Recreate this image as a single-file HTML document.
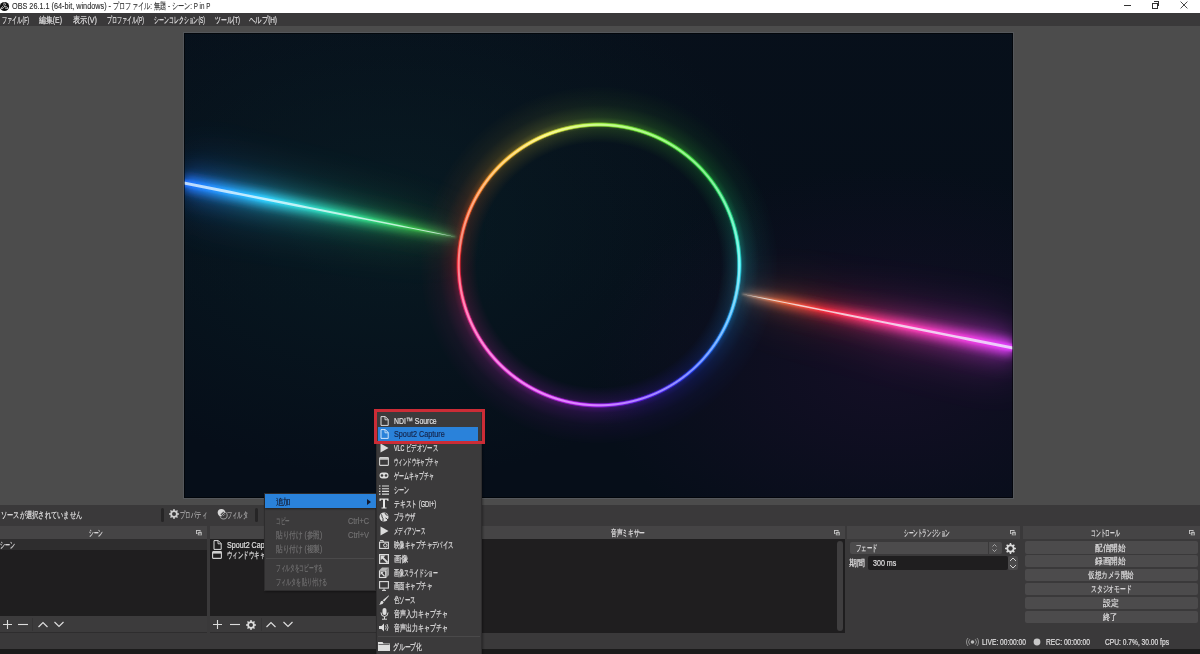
<!DOCTYPE html>
<html><head><meta charset="utf-8">
<style>
*{box-sizing:border-box;margin:0;padding:0}
html,body{width:1200px;height:654px;overflow:hidden;background:#3a393a;font-family:"Liberation Sans",sans-serif;color:#e1e0e1;font-size:9px;line-height:1}
.a{position:absolute}
.t{position:absolute;white-space:nowrap;transform-origin:0 50%;-webkit-text-stroke:0.18px currentColor}
svg.a{overflow:visible}
</style></head><body>
<div class="a" style="left:0px;top:0px;width:1200px;height:13px;background:#fff;"></div>
<svg class="a" style="left:0px;top:1px;" width="10" height="11" viewBox="0 0 10 11"><circle cx="4.5" cy="5.5" r="4.6" fill="#111"/><path transform="rotate(0 4.5 5.5)" d="M4.5 5.5Q3.2 3.6 4.2 1.6Q5.6 2.6 5.6 4.2" fill="none" stroke="#ddd" stroke-width="0.75"/><path transform="rotate(120 4.5 5.5)" d="M4.5 5.5Q3.2 3.6 4.2 1.6Q5.6 2.6 5.6 4.2" fill="none" stroke="#ddd" stroke-width="0.75"/><path transform="rotate(240 4.5 5.5)" d="M4.5 5.5Q3.2 3.6 4.2 1.6Q5.6 2.6 5.6 4.2" fill="none" stroke="#ddd" stroke-width="0.75"/></svg>
<span id="t0" class="t" style="left:12px;top:-0.20px;font-size:9px;line-height:12px;color:#2a2a2a;transform:scaleX(0.8078);-webkit-text-stroke:0.1px #2a2a2a">OBS 26.1.1 (64-bit, windows) -</span>
<span id="t1" class="t" style="left:112.7px;top:-0.20px;font-size:9px;line-height:12px;color:#2a2a2a;transform:scaleX(0.6908);-webkit-text-stroke:0.1px #2a2a2a">プロファイル: 無題 - シーン: P in P</span>
<div class="a" style="left:1124px;top:5px;width:7px;height:1px;background:#333;"></div>
<div class="a" style="left:1152px;top:3px;width:6px;height:6px;background:transparent;border:1px solid #333"></div>
<div class="a" style="left:1154px;top:1px;width:5px;height:5px;background:transparent;border-top:1px solid #333;border-right:1px solid #333"></div>
<svg class="a" style="left:1180px;top:1px;" width="8" height="8" viewBox="0 0 8 8"><path d="M0.6 0.6L7.4 7.4M7.4 0.6L0.6 7.4" stroke="#333" stroke-width="0.9"/></svg>
<div class="a" style="left:0px;top:13px;width:1200px;height:13px;background:#3a393a;"></div>
<span id="t2" class="t" style="left:2px;top:14.00px;font-size:9px;line-height:12px;color:#e1e0e1;transform:scaleX(0.5684);">ファイル(F)</span>
<span id="t3" class="t" style="left:39px;top:14.00px;font-size:9px;line-height:12px;color:#e1e0e1;transform:scaleX(0.7667);">編集(E)</span>
<span id="t4" class="t" style="left:73px;top:14.00px;font-size:9px;line-height:12px;color:#e1e0e1;transform:scaleX(0.8000);">表示(V)</span>
<span id="t5" class="t" style="left:107px;top:14.00px;font-size:9px;line-height:12px;color:#e1e0e1;transform:scaleX(0.5606);">プロファイル(P)</span>
<span id="t6" class="t" style="left:154px;top:14.00px;font-size:9px;line-height:12px;color:#e1e0e1;transform:scaleX(0.5484);">シーンコレクション(S)</span>
<span id="t7" class="t" style="left:215px;top:14.00px;font-size:9px;line-height:12px;color:#e1e0e1;transform:scaleX(0.6494);">ツール(T)</span>
<span id="t8" class="t" style="left:249px;top:14.00px;font-size:9px;line-height:12px;color:#e1e0e1;transform:scaleX(0.7089);">ヘルプ(H)</span>
<div class="a" style="left:0px;top:26px;width:1200px;height:479px;background:#4c4c4c;"></div>
<div class="a" style="left:183px;top:32px;width:831px;height:467px;background:#54575b;"></div>
<div class="a" style="left:184px;top:33px;width:829px;height:465px;background:#060e19;overflow:hidden">
<div class="a" style="left:0;top:-1px;width:829px;height:466px;background:radial-gradient(ellipse 380px 260px at 25% 40%, rgba(10,40,45,.45), rgba(0,0,0,0) 100%), radial-gradient(ellipse 300px 200px at 85% 72%, rgba(45,15,60,.35), rgba(0,0,0,0) 100%), linear-gradient(180deg, rgba(10,20,30,.3), rgba(0,0,0,0) 60%)"></div>
<div class="a" style="left:215px;top:32px;width:400px;height:400px;border-radius:50%;background:conic-gradient(from 0deg,#a0f838 0deg,#60f030 25deg,#28e040 50deg,#20e890 70deg,#30f0f8 90deg,#20a8ff 112deg,#2040ff 138deg,#6020ff 160deg,#b020ff 182deg,#d828f0 205deg,#f030d0 228deg,#ff3090 250deg,#ff2030 270deg,#ff5820 292deg,#ffb020 315deg,#f8f040 337deg,#a0f838 360deg);-webkit-mask-image:radial-gradient(circle at 50% 50%, rgba(0,0,0,0) 122px, rgba(0,0,0,.3) 136px, rgba(0,0,0,.8) 141px, rgba(0,0,0,.35) 148px, rgba(0,0,0,.12) 160px, rgba(0,0,0,0) 180px);filter:blur(2.5px);opacity:.45"></div>
<div class="a" style="left:215px;top:32px;width:400px;height:400px;border-radius:50%;background:conic-gradient(from 0deg,#a0f838 0deg,#60f030 25deg,#28e040 50deg,#20e890 70deg,#30f0f8 90deg,#20a8ff 112deg,#2040ff 138deg,#6020ff 160deg,#b020ff 182deg,#d828f0 205deg,#f030d0 228deg,#ff3090 250deg,#ff2030 270deg,#ff5820 292deg,#ffb020 315deg,#f8f040 337deg,#a0f838 360deg);-webkit-mask-image:radial-gradient(circle at 50% 50%, rgba(0,0,0,0) 137.8px, #000 139.2px, #000 141.4px, rgba(0,0,0,0) 143px)"></div>
<div class="a" style="left:215px;top:32px;width:400px;height:400px;border-radius:50%;background:rgba(255,255,255,.45);-webkit-mask-image:radial-gradient(circle at 50% 50%, rgba(0,0,0,0) 138.8px, #000 139.8px, #000 140.8px, rgba(0,0,0,0) 141.8px)"></div>
<svg class="a" style="left:0;top:-1px" width="829" height="466" viewBox="0 0 829 466">
<defs>
<linearGradient id="gl" x1="0" y1="151" x2="272" y2="205" gradientUnits="userSpaceOnUse">
<stop offset="0" stop-color="#2070ff"/><stop offset=".3" stop-color="#30d0ff"/><stop offset=".6" stop-color="#30e0a0"/><stop offset=".85" stop-color="#40d050"/><stop offset="1" stop-color="#60a060"/></linearGradient>
<linearGradient id="gr" x1="558" y1="262" x2="829" y2="316" gradientUnits="userSpaceOnUse">
<stop offset="0" stop-color="#b0a090"/><stop offset=".15" stop-color="#ff7040"/><stop offset=".3" stop-color="#ff3040"/><stop offset=".6" stop-color="#ff40b0"/><stop offset="1" stop-color="#e040ff"/></linearGradient>
<filter id="bl" x="-20%" y="-200%" width="140%" height="500%"><feGaussianBlur stdDeviation="5"/></filter>
<filter id="bl2" x="-20%" y="-200%" width="140%" height="500%"><feGaussianBlur stdDeviation="0.8"/></filter><filter id="bl4" x="-30%" y="-300%" width="160%" height="700%"><feGaussianBlur stdDeviation="10"/></filter><filter id="bl5" x="-50%" y="-500%" width="200%" height="1100%"><feGaussianBlur stdDeviation="22"/></filter><filter id="bl3" x="-20%" y="-200%" width="140%" height="500%"><feGaussianBlur stdDeviation="0.4"/></filter>
</defs>
<polygon points="0.0,123.00 22.7,128.52 45.3,134.09 68.0,139.72 90.7,145.40 113.3,151.17 136.0,157.03 158.7,163.01 181.3,169.14 204.0,175.50 226.7,182.20 249.3,189.57 272.0,201.00 272.0,209.00 249.3,211.43 226.7,209.80 204.0,207.50 181.3,204.86 158.7,201.99 136.0,198.97 113.3,195.83 90.7,192.60 68.0,189.28 45.3,185.91 22.7,182.48 0.0,179.00" fill="url(#gl)" filter="url(#bl5)" opacity=".2"/>
<polygon points="0.0,134.00 22.7,139.21 45.3,144.45 68.0,149.72 90.7,155.02 113.3,160.37 136.0,165.76 158.7,171.22 181.3,176.76 204.0,182.41 226.7,188.22 249.3,194.35 272.0,202.00 272.0,208.00 249.3,206.65 226.7,203.78 204.0,200.59 181.3,197.24 158.7,193.78 136.0,190.24 113.3,186.63 90.7,182.98 68.0,179.28 45.3,175.55 22.7,171.79 0.0,168.00" fill="url(#gl)" filter="url(#bl4)" opacity=".3"/>
<polygon points="0.0,143.70 11.3,146.09 22.7,148.48 34.0,150.87 45.3,153.27 56.7,155.67 68.0,158.07 79.3,160.48 90.7,162.89 102.0,165.31 113.3,167.74 124.7,170.17 136.0,172.60 147.3,175.05 158.7,177.50 170.0,179.97 181.3,182.45 192.7,184.94 204.0,187.45 215.3,189.98 226.7,192.55 238.0,195.15 249.3,197.82 260.7,200.62 272.0,204.20 272.0,205.80 260.7,204.88 249.3,203.18 238.0,201.35 226.7,199.45 215.3,197.52 204.0,195.55 192.7,193.56 181.3,191.55 170.0,189.53 158.7,187.50 147.3,185.45 136.0,183.40 124.7,181.33 113.3,179.26 102.0,177.19 90.7,175.11 79.3,173.02 68.0,170.93 56.7,168.83 45.3,166.73 34.0,164.63 22.7,162.52 11.3,160.41 0.0,158.30" fill="url(#gl)" filter="url(#bl)" opacity="1"/>
<polygon points="0.0,147.60 11.3,149.91 22.7,152.23 34.0,154.54 45.3,156.86 56.7,159.18 68.0,161.50 79.3,163.83 90.7,166.15 102.0,168.48 113.3,170.81 124.7,173.14 136.0,175.48 147.3,177.82 158.7,180.16 170.0,182.51 181.3,184.87 192.7,187.23 204.0,189.60 215.3,191.98 226.7,194.38 238.0,196.79 249.3,199.23 260.7,201.74 272.0,204.60 272.0,205.40 260.7,203.76 249.3,201.77 238.0,199.71 226.7,197.62 215.3,195.52 204.0,193.40 192.7,191.27 181.3,189.13 170.0,186.99 158.7,184.84 147.3,182.68 136.0,180.52 124.7,178.36 113.3,176.19 102.0,174.02 90.7,171.85 79.3,169.67 68.0,167.50 56.7,165.32 45.3,163.14 34.0,160.96 22.7,158.77 11.3,156.59 0.0,154.40" fill="url(#gl)" filter="url(#bl2)"/>
<polygon points="0.0,149.45 11.3,151.74 22.7,154.03 34.0,156.32 45.3,158.61 56.7,160.90 68.0,163.19 79.3,165.48 90.7,167.77 102.0,170.07 113.3,172.36 124.7,174.66 136.0,176.96 147.3,179.26 158.7,181.56 170.0,183.87 181.3,186.17 192.7,188.48 204.0,190.80 215.3,193.11 226.7,195.44 238.0,197.77 249.3,200.11 260.7,202.48 272.0,204.95 272.0,205.05 260.7,203.02 249.3,200.89 238.0,198.73 226.7,196.56 215.3,194.39 204.0,192.20 192.7,190.02 181.3,187.83 170.0,185.63 158.7,183.44 147.3,181.24 136.0,179.04 124.7,176.84 113.3,174.64 102.0,172.43 90.7,170.23 79.3,168.02 68.0,165.81 56.7,163.60 45.3,161.39 34.0,159.18 22.7,156.97 11.3,154.76 0.0,152.55" fill="#f0fcff" opacity=".75" filter="url(#bl3)"/>
<polygon points="558.0,258.00 580.6,255.57 603.2,257.20 625.8,259.50 648.3,262.14 670.9,265.01 693.5,268.03 716.1,271.17 738.7,274.40 761.2,277.72 783.8,281.09 806.4,284.52 829.0,288.00 829.0,344.00 806.4,338.48 783.8,332.91 761.2,327.28 738.7,321.60 716.1,315.83 693.5,309.97 670.9,303.99 648.3,297.86 625.8,291.50 603.2,284.80 580.6,277.43 558.0,266.00" fill="url(#gr)" filter="url(#bl5)" opacity=".2"/>
<polygon points="558.0,259.00 580.6,260.35 603.2,263.22 625.8,266.41 648.3,269.76 670.9,273.22 693.5,276.76 716.1,280.37 738.7,284.02 761.2,287.72 783.8,291.45 806.4,295.21 829.0,299.00 829.0,333.00 806.4,327.79 783.8,322.55 761.2,317.28 738.7,311.98 716.1,306.63 693.5,301.24 670.9,295.78 648.3,290.24 625.8,284.59 603.2,278.78 580.6,272.65 558.0,265.00" fill="url(#gr)" filter="url(#bl4)" opacity=".3"/>
<polygon points="558.0,261.20 569.3,262.12 580.6,263.82 591.9,265.65 603.2,267.55 614.5,269.48 625.8,271.45 637.0,273.44 648.3,275.45 659.6,277.47 670.9,279.50 682.2,281.55 693.5,283.60 704.8,285.67 716.1,287.74 727.4,289.81 738.7,291.89 750.0,293.98 761.2,296.07 772.5,298.17 783.8,300.27 795.1,302.37 806.4,304.48 817.7,306.59 829.0,308.70 829.0,323.30 817.7,320.91 806.4,318.52 795.1,316.13 783.8,313.73 772.5,311.33 761.2,308.93 750.0,306.52 738.7,304.11 727.4,301.69 716.1,299.26 704.8,296.83 693.5,294.40 682.2,291.95 670.9,289.50 659.6,287.03 648.3,284.55 637.0,282.06 625.8,279.55 614.5,277.02 603.2,274.45 591.9,271.85 580.6,269.18 569.3,266.38 558.0,262.80" fill="url(#gr)" filter="url(#bl)" opacity="1"/>
<polygon points="558.0,261.60 569.3,263.24 580.6,265.23 591.9,267.29 603.2,269.38 614.5,271.48 625.8,273.60 637.0,275.73 648.3,277.87 659.6,280.01 670.9,282.16 682.2,284.32 693.5,286.48 704.8,288.64 716.1,290.81 727.4,292.98 738.7,295.15 750.0,297.33 761.2,299.50 772.5,301.68 783.8,303.86 795.1,306.04 806.4,308.23 817.7,310.41 829.0,312.60 829.0,319.40 817.7,317.09 806.4,314.77 795.1,312.46 783.8,310.14 772.5,307.82 761.2,305.50 750.0,303.17 738.7,300.85 727.4,298.52 716.1,296.19 704.8,293.86 693.5,291.52 682.2,289.18 670.9,286.84 659.6,284.49 648.3,282.13 637.0,279.77 625.8,277.40 614.5,275.02 603.2,272.62 591.9,270.21 580.6,267.77 569.3,265.26 558.0,262.40" fill="url(#gr)" filter="url(#bl2)"/>
<polygon points="558.0,261.95 569.3,263.98 580.6,266.11 591.9,268.27 603.2,270.44 614.5,272.61 625.8,274.80 637.0,276.98 648.3,279.17 659.6,281.37 670.9,283.56 682.2,285.76 693.5,287.96 704.8,290.16 716.1,292.36 727.4,294.57 738.7,296.77 750.0,298.98 761.2,301.19 772.5,303.40 783.8,305.61 795.1,307.82 806.4,310.03 817.7,312.24 829.0,314.45 829.0,317.55 817.7,315.26 806.4,312.97 795.1,310.68 783.8,308.39 772.5,306.10 761.2,303.81 750.0,301.52 738.7,299.23 727.4,296.93 716.1,294.64 704.8,292.34 693.5,290.04 682.2,287.74 670.9,285.44 659.6,283.13 648.3,280.83 637.0,278.52 625.8,276.20 614.5,273.89 603.2,271.56 591.9,269.23 580.6,266.89 569.3,264.52 558.0,262.05" fill="#f0fcff" opacity=".75" filter="url(#bl3)"/>
</svg>
<div class="a" style="left:0;top:0;width:829px;height:465px;box-shadow:inset 0 0 0 1px rgba(0,0,0,.55)"></div></div>
<div class="a" style="left:0px;top:505px;width:1200px;height:21px;background:#3a393a;"></div>
<span id="t9" class="t" style="left:1px;top:508.50px;font-size:9px;line-height:12px;color:#e1e0e1;transform:scaleX(0.6923);">ソースが選択されていません</span>
<div class="a" style="left:161px;top:508px;width:3px;height:14px;background:#262526;border-radius:1.5px"></div>
<div class="a" style="left:255px;top:508px;width:3px;height:14px;background:#262526;border-radius:1.5px"></div>
<svg class="a" style="left:169px;top:509px;" width="10" height="10" viewBox="0 0 10 10"><polygon points="4.21,1.49 4.35,0.04 5.65,0.04 5.79,1.49 6.93,1.96 8.05,1.04 8.96,1.95 8.04,3.07 8.51,4.21 9.96,4.35 9.96,5.65 8.51,5.79 8.04,6.93 8.96,8.05 8.05,8.96 6.93,8.04 5.79,8.51 5.65,9.96 4.35,9.96 4.21,8.51 3.07,8.04 1.95,8.96 1.04,8.05 1.96,6.93 1.49,5.79 0.04,5.65 0.04,4.35 1.49,4.21 1.96,3.07 1.04,1.95 1.95,1.04 3.07,1.96" fill="#cfcfcf"/><circle cx="5.0" cy="5.0" r="3.5999999999999996" fill="#cfcfcf"/><circle cx="5.0" cy="5.0" r="2.0" fill="#3a393a"/></svg>
<span id="t10" class="t" style="left:180px;top:508.50px;font-size:9px;line-height:12px;color:#a9a8a9;transform:scaleX(0.6000);">プロパティ</span>
<svg class="a" style="left:217px;top:508px;" width="11" height="12" viewBox="0 0 11 12"><circle cx="6.6" cy="7.4" r="3.6" fill="none" stroke="#9a9a9a" stroke-width="1.1"/><circle cx="4.4" cy="4.6" r="3.7" fill="#d8d8d8"/><path d="M6.2 3.4L9 6.2L6.2 9L3.4 6.2Z" fill="#3a393a"/><path d="M4.2 5.4l2.6 2.6M5.4 4.2l2.6 2.6M4.9 6.9l2.6-2.6" stroke="#bdbdbd" stroke-width="0.7"/></svg>
<span id="t11" class="t" style="left:227px;top:508.50px;font-size:9px;line-height:12px;color:#a9a8a9;transform:scaleX(0.5833);">フィルタ</span>
<div class="a" style="left:0px;top:526px;width:207px;height:13px;background:#454445;"></div>
<div class="a" style="left:0px;top:539px;width:207px;height:77px;background:#1f1e1f;"></div>
<div class="a" style="left:0px;top:616px;width:207px;height:17px;background:#3c3b3c;"></div>
<div class="a" style="left:0px;top:632px;width:207px;height:1px;background:#2e2d2e;"></div>
<svg class="a" style="left:196px;top:529.5px;" width="7" height="7" viewBox="0 0 7 7"><rect x="0.5" y="0.5" width="3.6" height="3" fill="none" stroke="#c8c8c8" stroke-width="0.9"/><rect x="1.8" y="1.9" width="4.2" height="3.6" fill="#d0d0d0" stroke="#454445" stroke-width="0.5"/><rect x="2.6" y="3.2" width="2.6" height="1.6" fill="#6a6a6a"/></svg>
<span id="t12" class="t" style="left:89px;top:526.50px;font-size:9px;line-height:12px;color:#e1e0e1;transform:scaleX(0.5185);">シーン</span>
<div class="a" style="left:0px;top:539px;width:207px;height:11px;background:#2e2d2e;"></div>
<span id="t13" class="t" style="left:0px;top:538.50px;font-size:9px;line-height:12px;color:#e1e0e1;transform:scaleX(0.5556);">シーン</span>
<div class="a" style="left:210px;top:526px;width:269px;height:13px;background:#454445;"></div>
<div class="a" style="left:210px;top:539px;width:269px;height:77px;background:#1f1e1f;"></div>
<div class="a" style="left:210px;top:616px;width:269px;height:17px;background:#3c3b3c;"></div>
<div class="a" style="left:210px;top:632px;width:269px;height:1px;background:#2e2d2e;"></div>
<svg class="a" style="left:213px;top:540px;" width="9" height="10" viewBox="0 0 9 10"><path d="M1 0.6H5.3L8.2 3.5V9.4H1Z" fill="none" stroke="#dcdcdc" stroke-width="1"/><path d="M5 0.6V3.8H8.2" fill="none" stroke="#dcdcdc" stroke-width="0.9"/></svg>
<span id="t14" class="t" style="left:227px;top:538.80px;font-size:9px;line-height:12px;color:#e1e0e1;transform:scaleX(0.7931);">Spout2 Capture</span>
<svg class="a" style="left:212px;top:551px;" width="10" height="8" viewBox="0 0 10 8"><rect x="0.6" y="0.6" width="8.8" height="6.8" rx="0.6" fill="none" stroke="#d0d0d0" stroke-width="1.1"/><path d="M0.6 1.8H9.4" stroke="#d0d0d0" stroke-width="1.6"/></svg>
<span id="t15" class="t" style="left:227px;top:548.90px;font-size:9px;line-height:12px;color:#e1e0e1;transform:scaleX(0.6111);">ウィンドウキャプチャ</span>
<div class="a" style="left:482px;top:526px;width:363px;height:13px;background:#454445;"></div>
<span id="t16" class="t" style="left:611px;top:526.60px;font-size:9px;line-height:12px;color:#e1e0e1;transform:scaleX(0.6296);">音声ミキサー</span>
<svg class="a" style="left:834px;top:529.5px;" width="7" height="7" viewBox="0 0 7 7"><rect x="0.5" y="0.5" width="3.6" height="3" fill="none" stroke="#c8c8c8" stroke-width="0.9"/><rect x="1.8" y="1.9" width="4.2" height="3.6" fill="#d0d0d0" stroke="#454445" stroke-width="0.5"/><rect x="2.6" y="3.2" width="2.6" height="1.6" fill="#6a6a6a"/></svg>
<div class="a" style="left:482px;top:539px;width:363px;height:94px;background:#1f1e1f;"></div>
<div class="a" style="left:837px;top:541px;width:6px;height:90px;background:#3f3e3f;border-radius:3px"></div>
<div class="a" style="left:847px;top:526px;width:173px;height:13px;background:#454445;"></div>
<span id="t17" class="t" style="left:904px;top:526.50px;font-size:9px;line-height:12px;color:#e1e0e1;transform:scaleX(0.5111);">シーントランジション</span>
<svg class="a" style="left:1010px;top:529.5px;" width="7" height="7" viewBox="0 0 7 7"><rect x="0.5" y="0.5" width="3.6" height="3" fill="none" stroke="#c8c8c8" stroke-width="0.9"/><rect x="1.8" y="1.9" width="4.2" height="3.6" fill="#d0d0d0" stroke="#454445" stroke-width="0.5"/><rect x="2.6" y="3.2" width="2.6" height="1.6" fill="#6a6a6a"/></svg>
<div class="a" style="left:850px;top:542px;width:152px;height:12px;background:#4c4b4c;border-radius:2px"></div>
<div class="a" style="left:988px;top:542px;width:1px;height:12px;background:#3a393a;"></div>
<svg class="a" style="left:991px;top:543px;" width="7" height="10" viewBox="0 0 7 10"><path d="M1.5 3.5L3.5 1.5L5.5 3.5M1.5 6.5L3.5 8.5L5.5 6.5" fill="none" stroke="#bbb" stroke-width="0.8"/></svg>
<span id="t18" class="t" style="left:856px;top:542.00px;font-size:9px;line-height:12px;color:#e1e0e1;transform:scaleX(0.5972);">フェード</span>
<svg class="a" style="left:1005px;top:543px;" width="11" height="11" viewBox="0 0 11 11"><polygon points="4.64,1.64 4.79,0.05 6.21,0.05 6.36,1.64 7.62,2.16 8.85,1.14 9.86,2.15 8.84,3.38 9.36,4.64 10.95,4.79 10.95,6.21 9.36,6.36 8.84,7.62 9.86,8.85 8.85,9.86 7.62,8.84 6.36,9.36 6.21,10.95 4.79,10.95 4.64,9.36 3.38,8.84 2.15,9.86 1.14,8.85 2.16,7.62 1.64,6.36 0.05,6.21 0.05,4.79 1.64,4.64 2.16,3.38 1.14,2.15 2.15,1.14 3.38,2.16" fill="#dcdcdc"/><circle cx="5.5" cy="5.5" r="3.96" fill="#dcdcdc"/><circle cx="5.5" cy="5.5" r="2.2" fill="#3a393a"/></svg>
<span id="t19" class="t" style="left:849px;top:556.70px;font-size:9px;line-height:12px;color:#e1e0e1;transform:scaleX(0.8889);">期間</span>
<div class="a" style="left:868px;top:556px;width:140px;height:13.5px;background:#1f1e1f;border-radius:2px"></div>
<span id="t20" class="t" style="left:872.5px;top:556.70px;font-size:9px;line-height:12px;color:#e1e0e1;transform:scaleX(0.7894);">300 ms</span>
<div class="a" style="left:1008px;top:556px;width:10px;height:14px;background:#4a494a;border-radius:2px"></div>
<svg class="a" style="left:1008px;top:556px;" width="10" height="14" viewBox="0 0 10 14"><path d="M2 5L5 2L8 5M2 9L5 12L8 9" fill="none" stroke="#cfcfcf" stroke-width="1"/></svg>
<div class="a" style="left:1023px;top:526px;width:177px;height:13px;background:#454445;"></div>
<span id="t21" class="t" style="left:1090.7px;top:526.60px;font-size:9px;line-height:12px;color:#e1e0e1;transform:scaleX(0.5296);">コントロール</span>
<svg class="a" style="left:1189px;top:529.5px;" width="7" height="7" viewBox="0 0 7 7"><rect x="0.5" y="0.5" width="3.6" height="3" fill="none" stroke="#c8c8c8" stroke-width="0.9"/><rect x="1.8" y="1.9" width="4.2" height="3.6" fill="#d0d0d0" stroke="#454445" stroke-width="0.5"/><rect x="2.6" y="3.2" width="2.6" height="1.6" fill="#6a6a6a"/></svg>
<div class="a" style="left:1025px;top:541.4px;width:172.5px;height:12.2px;background:#4c4b4c;border-radius:2px"></div>
<span id="t22" class="t" style="left:1095.4px;top:541.50px;font-size:9px;line-height:12px;color:#e1e0e1;transform:scaleX(0.8500);">配信開始</span>
<div class="a" style="left:1025px;top:555.24px;width:172.5px;height:12.2px;background:#4c4b4c;border-radius:2px"></div>
<span id="t23" class="t" style="left:1095.4px;top:555.34px;font-size:9px;line-height:12px;color:#e1e0e1;transform:scaleX(0.8500);">録画開始</span>
<div class="a" style="left:1025px;top:569.08px;width:172.5px;height:12.2px;background:#4c4b4c;border-radius:2px"></div>
<span id="t24" class="t" style="left:1088px;top:569.18px;font-size:9px;line-height:12px;color:#e1e0e1;transform:scaleX(0.7238);">仮想カメラ開始</span>
<div class="a" style="left:1025px;top:582.92px;width:172.5px;height:12.2px;background:#4c4b4c;border-radius:2px"></div>
<span id="t25" class="t" style="left:1090.7px;top:583.02px;font-size:9px;line-height:12px;color:#e1e0e1;transform:scaleX(0.6397);">スタジオモード</span>
<div class="a" style="left:1025px;top:596.76px;width:172.5px;height:12.2px;background:#4c4b4c;border-radius:2px"></div>
<span id="t26" class="t" style="left:1102.5px;top:596.86px;font-size:9px;line-height:12px;color:#e1e0e1;transform:scaleX(0.8833);">設定</span>
<div class="a" style="left:1025px;top:610.6px;width:172.5px;height:12.2px;background:#4c4b4c;border-radius:2px"></div>
<span id="t27" class="t" style="left:1103px;top:610.70px;font-size:9px;line-height:12px;color:#e1e0e1;transform:scaleX(0.8056);">終了</span>
<svg class="a" style="left:3px;top:620px;" width="9" height="9" viewBox="0 0 9 9"><path d="M4.5 0V9M0 4.5H9" stroke="#dcdcdc" stroke-width="1.1"/></svg>
<svg class="a" style="left:18px;top:620px;" width="10" height="9" viewBox="0 0 10 9"><path d="M0 4.5H10" stroke="#dcdcdc" stroke-width="1.1"/></svg>
<div class="a" style="left:32px;top:618px;width:1px;height:13px;background:#353435;"></div>
<svg class="a" style="left:38px;top:621px;" width="10" height="7" viewBox="0 0 10 7"><path d="M0.5 6L5 1.5L9.5 6" fill="none" stroke="#dcdcdc" stroke-width="1.2"/></svg>
<svg class="a" style="left:54px;top:621px;" width="10" height="7" viewBox="0 0 10 7"><path d="M0.5 1L5 5.5L9.5 1" fill="none" stroke="#dcdcdc" stroke-width="1.2"/></svg>
<svg class="a" style="left:213px;top:620px;" width="9" height="9" viewBox="0 0 9 9"><path d="M4.5 0V9M0 4.5H9" stroke="#dcdcdc" stroke-width="1.1"/></svg>
<svg class="a" style="left:230px;top:620px;" width="10" height="9" viewBox="0 0 10 9"><path d="M0 4.5H10" stroke="#dcdcdc" stroke-width="1.1"/></svg>
<svg class="a" style="left:246px;top:619.5px;" width="10" height="10" viewBox="0 0 10 10"><polygon points="4.21,1.49 4.35,0.04 5.65,0.04 5.79,1.49 6.93,1.96 8.05,1.04 8.96,1.95 8.04,3.07 8.51,4.21 9.96,4.35 9.96,5.65 8.51,5.79 8.04,6.93 8.96,8.05 8.05,8.96 6.93,8.04 5.79,8.51 5.65,9.96 4.35,9.96 4.21,8.51 3.07,8.04 1.95,8.96 1.04,8.05 1.96,6.93 1.49,5.79 0.04,5.65 0.04,4.35 1.49,4.21 1.96,3.07 1.04,1.95 1.95,1.04 3.07,1.96" fill="#dcdcdc"/><circle cx="5.0" cy="5.0" r="3.5999999999999996" fill="#dcdcdc"/><circle cx="5.0" cy="5.0" r="2.0" fill="#3a393a"/></svg>
<div class="a" style="left:261px;top:618px;width:1px;height:13px;background:#353435;"></div>
<svg class="a" style="left:266px;top:621px;" width="10" height="7" viewBox="0 0 10 7"><path d="M0.5 6L5 1.5L9.5 6" fill="none" stroke="#dcdcdc" stroke-width="1.2"/></svg>
<svg class="a" style="left:283px;top:621px;" width="10" height="7" viewBox="0 0 10 7"><path d="M0.5 1L5 5.5L9.5 1" fill="none" stroke="#dcdcdc" stroke-width="1.2"/></svg>
<svg class="a" style="left:966px;top:638px;" width="13" height="8" viewBox="0 0 13 8"><circle cx="6.5" cy="4" r="1.8" fill="#bbb"/><path d="M3.8 1.2A4 4 0 0 0 3.8 6.8M9.2 1.2A4 4 0 0 1 9.2 6.8M2 0A6 6 0 0 0 2 8M11 0A6 6 0 0 1 11 8" fill="none" stroke="#9a9a9a" stroke-width="0.9"/></svg>
<span id="t28" class="t" style="left:982px;top:636.00px;font-size:9px;line-height:12px;color:#e1e0e1;transform:scaleX(0.7389);">LIVE: 00:00:00</span>
<svg class="a" style="left:1033px;top:638px;" width="8" height="8" viewBox="0 0 8 8"><circle cx="4" cy="4" r="3.4" fill="#c8c8c8"/></svg>
<span id="t29" class="t" style="left:1046px;top:636.00px;font-size:9px;line-height:12px;color:#e1e0e1;transform:scaleX(0.7452);">REC: 00:00:00</span>
<span id="t30" class="t" style="left:1105px;top:636.00px;font-size:9px;line-height:12px;color:#e1e0e1;transform:scaleX(0.7395);">CPU: 0.7%, 30.00 fps</span>
<div class="a" style="left:0px;top:649px;width:1200px;height:5px;background:#1b1b1b;"></div>
<div class="a" style="left:264px;top:492.5px;width:112px;height:98px;background:#3b3a3b;border:1px solid #2e2d2e;box-shadow:1px 1px 2px rgba(0,0,0,.35)"></div>
<div class="a" style="left:265.3px;top:494.3px;width:110.7px;height:13.9px;background:#2a82da;box-shadow:0 1px 2px rgba(0,0,0,.45)"></div>
<span id="t31" class="t" style="left:276px;top:495.50px;font-size:9px;line-height:12px;color:#151d33;transform:scaleX(0.8333);">追加</span>
<svg class="a" style="left:367px;top:498.5px;" width="4" height="6" viewBox="0 0 4 6"><path d="M0 0L4 3L0 6Z" fill="#111a30"/></svg>
<span id="t32" class="t" style="left:276px;top:515.00px;font-size:9px;line-height:12px;color:#727172;transform:scaleX(0.5000);">コピー</span>
<span id="t33" class="t" style="left:347.5px;top:515.00px;font-size:9px;line-height:12px;color:#727172;transform:scaleX(0.8150);">Ctrl+C</span>
<span id="t34" class="t" style="left:276px;top:529.00px;font-size:9px;line-height:12px;color:#727172;transform:scaleX(0.7408);">貼り付け (参照)</span>
<span id="t35" class="t" style="left:347.5px;top:529.00px;font-size:9px;line-height:12px;color:#727172;transform:scaleX(0.8312);">Ctrl+V</span>
<span id="t36" class="t" style="left:276px;top:542.60px;font-size:9px;line-height:12px;color:#727172;transform:scaleX(0.7408);">貼り付け (複製)</span>
<div class="a" style="left:266px;top:558px;width:108px;height:1px;background:#4a494a;"></div>
<span id="t37" class="t" style="left:276px;top:562.00px;font-size:9px;line-height:12px;color:#727172;transform:scaleX(0.5222);">フィルタをコピーする</span>
<span id="t38" class="t" style="left:276px;top:575.70px;font-size:9px;line-height:12px;color:#727172;transform:scaleX(0.5667);">フィルタを貼り付ける</span>
<div class="a" style="left:376px;top:411px;width:106px;height:260px;background:#3b3a3b;border:1px solid #2e2d2e;box-shadow:1px 1px 2px rgba(0,0,0,.35)"></div>
<div class="a" style="left:377.5px;top:427.4px;width:100.5px;height:13.2px;background:#2a82da;"></div>
<span id="t39" class="t" style="left:393.5px;top:415.00px;font-size:9px;line-height:12px;color:#e1e0e1;transform:scaleX(0.7689);">NDI™ Source</span>
<span id="t40" class="t" style="left:393.5px;top:428.20px;font-size:9px;line-height:12px;color:#15244a;transform:scaleX(0.8057);">Spout2 Capture</span>
<span id="t41" class="t" style="left:393.5px;top:442.00px;font-size:9px;line-height:12px;color:#e1e0e1;transform:scaleX(0.5945);">VLC ビデオソース</span>
<span id="t42" class="t" style="left:393.5px;top:456.00px;font-size:9px;line-height:12px;color:#e1e0e1;transform:scaleX(0.4889);">ウィンドウキャプチャ</span>
<span id="t43" class="t" style="left:393.5px;top:470.00px;font-size:9px;line-height:12px;color:#e1e0e1;transform:scaleX(0.5486);">ゲームキャプチャ</span>
<span id="t44" class="t" style="left:393.5px;top:484.00px;font-size:9px;line-height:12px;color:#e1e0e1;transform:scaleX(0.5630);">シーン</span>
<span id="t45" class="t" style="left:393.5px;top:497.50px;font-size:9px;line-height:12px;color:#e1e0e1;transform:scaleX(0.6417);">テキスト (GDI+)</span>
<span id="t46" class="t" style="left:393.5px;top:511.00px;font-size:9px;line-height:12px;color:#e1e0e1;transform:scaleX(0.5861);">ブラウザ</span>
<span id="t47" class="t" style="left:393.5px;top:525.30px;font-size:9px;line-height:12px;color:#e1e0e1;transform:scaleX(0.4984);">メディアソース</span>
<span id="t48" class="t" style="left:393.5px;top:539.00px;font-size:9px;line-height:12px;color:#e1e0e1;transform:scaleX(0.6030);">映像キャプチャデバイス</span>
<span id="t49" class="t" style="left:393.5px;top:553.00px;font-size:9px;line-height:12px;color:#e1e0e1;transform:scaleX(0.8056);">画像</span>
<span id="t50" class="t" style="left:393.5px;top:566.50px;font-size:9px;line-height:12px;color:#e1e0e1;transform:scaleX(0.5469);">画像スライドショー</span>
<span id="t51" class="t" style="left:393.5px;top:580.00px;font-size:9px;line-height:12px;color:#e1e0e1;transform:scaleX(0.6048);">画面キャプチャ</span>
<span id="t52" class="t" style="left:393.5px;top:594.00px;font-size:9px;line-height:12px;color:#e1e0e1;transform:scaleX(0.6028);">色ソース</span>
<span id="t53" class="t" style="left:393.5px;top:608.00px;font-size:9px;line-height:12px;color:#e1e0e1;transform:scaleX(0.6605);">音声入力キャプチャ</span>
<span id="t54" class="t" style="left:393.5px;top:621.50px;font-size:9px;line-height:12px;color:#e1e0e1;transform:scaleX(0.6605);">音声出力キャプチャ</span>
<div class="a" style="left:378px;top:636px;width:102px;height:1px;background:#4a494a;"></div>
<span id="t55" class="t" style="left:393px;top:641.00px;font-size:9px;line-height:12px;color:#e1e0e1;transform:scaleX(0.6444);">グループ化</span>
<svg class="a" style="left:380px;top:416px;" width="9" height="10" viewBox="0 0 9 10"><path d="M1 0.6H5.3L8.2 3.5V9.4H1Z" fill="none" stroke="#dcdcdc" stroke-width="1"/><path d="M5 0.6V3.8H8.2" fill="none" stroke="#dcdcdc" stroke-width="0.9"/></svg>
<svg class="a" style="left:380px;top:429px;" width="9" height="10" viewBox="0 0 9 10"><path d="M1 0.6H5.3L8.2 3.5V9.4H1Z" fill="none" stroke="#cfe4fb" stroke-width="1"/><path d="M5 0.6V3.8H8.2" fill="none" stroke="#cfe4fb" stroke-width="0.9"/></svg>
<svg class="a" style="left:380px;top:443px;" width="9" height="10" viewBox="0 0 9 10"><path d="M0.5 0.5L8.5 5L0.5 9.5Z" fill="#dcdcdc"/></svg>
<svg class="a" style="left:379px;top:457px;" width="10" height="9" viewBox="0 0 10 9"><rect x="0.6" y="0.6" width="8.8" height="7.8" rx="0.6" fill="none" stroke="#d0d0d0" stroke-width="1.1"/><path d="M0.6 1.9H9.4" stroke="#d0d0d0" stroke-width="1.6"/></svg>
<svg class="a" style="left:379px;top:472px;" width="10" height="7" viewBox="0 0 10 7"><rect x="0.5" y="0.5" width="9" height="6" rx="3" fill="#dcdcdc"/><circle cx="3" cy="3.5" r="1.3" fill="#3b3a3b"/><circle cx="7" cy="3.5" r="1.3" fill="#3b3a3b"/></svg>
<svg class="a" style="left:379px;top:485px;" width="10" height="10" viewBox="0 0 10 10"><path d="M0 1H1.5M0 3.7H1.5M0 6.4H1.5M0 9.1H1.5M3 1H10M3 3.7H10M3 6.4H10M3 9.1H10" stroke="#dcdcdc" stroke-width="1.1"/></svg>
<svg class="a" style="left:379px;top:498px;" width="10" height="11" viewBox="0 0 10 11"><path d="M0.5 0.5H9.5V3H8.5L8 1.8H6V9.6H7.5V10.5H2.5V9.6H4V1.8H2L1.5 3H0.5Z" fill="#e8e8e8"/></svg>
<svg class="a" style="left:379px;top:512px;" width="10" height="10" viewBox="0 0 10 10"><circle cx="5" cy="5" r="4.5" fill="#dcdcdc"/><path d="M2 2.5Q3.5 3 3 5Q4.5 6 4 9M6 1Q6.5 3 8.5 3.5M6.5 6Q8 6.5 9 8" fill="none" stroke="#3b3a3b" stroke-width="1"/></svg>
<svg class="a" style="left:380px;top:526px;" width="9" height="10" viewBox="0 0 9 10"><path d="M0.5 0.5L8.5 5L0.5 9.5Z" fill="#dcdcdc"/></svg>
<svg class="a" style="left:379px;top:540px;" width="10" height="9" viewBox="0 0 10 9"><path d="M1 0.6H4.2V2.2" fill="none" stroke="#dcdcdc" stroke-width="1"/><rect x="0.6" y="2.2" width="8.8" height="6.2" fill="none" stroke="#dcdcdc" stroke-width="1.1"/><circle cx="6.3" cy="5.3" r="1.7" fill="none" stroke="#dcdcdc" stroke-width="1"/></svg>
<svg class="a" style="left:379px;top:554px;" width="10" height="10" viewBox="0 0 10 10"><rect x="0.6" y="0.6" width="8.8" height="8.8" fill="none" stroke="#dcdcdc" stroke-width="1.2"/><path d="M1.6 1.6H6.4L1.6 6.4Z" fill="#dcdcdc"/><path d="M3.5 3.5L8.6 8.6" stroke="#dcdcdc" stroke-width="1.8"/></svg>
<svg class="a" style="left:379px;top:567px;" width="10" height="11" viewBox="0 0 10 11"><path d="M0 3.5L3 0.5H10L7 3.5Z" fill="#b8b8b8"/><path d="M7 3.5L10 0.5V8L7 11Z" fill="#9a9a9a"/><rect x="0.5" y="4" width="6.2" height="6.5" fill="none" stroke="#dcdcdc" stroke-width="1.1"/><path d="M1.5 5H4.5L1.5 8Z" fill="#dcdcdc"/><path d="M2.5 6L5.6 9.4" stroke="#dcdcdc" stroke-width="1.3"/></svg>
<svg class="a" style="left:379px;top:581px;" width="10" height="10" viewBox="0 0 10 10"><rect x="0.6" y="0.6" width="8.8" height="6.5" fill="none" stroke="#dcdcdc" stroke-width="1.1"/><path d="M3 9.4H7M5 7.5V9.4" stroke="#dcdcdc" stroke-width="1"/></svg>
<svg class="a" style="left:379px;top:595px;" width="10" height="10" viewBox="0 0 10 10"><path d="M9.8 0.2L9.9 0.9L5.2 6.6L3.7 5.3Z" fill="#dcdcdc"/><path d="M3.3 5.8Q1.6 5.9 1.3 7.8Q1.1 9.2 0 9.8Q3.6 10.3 4.7 7.2Z" fill="#dcdcdc"/></svg>
<svg class="a" style="left:380px;top:608px;" width="9" height="12" viewBox="0 0 9 12"><rect x="2.5" y="0" width="4" height="7" rx="2" fill="#dcdcdc"/><path d="M1 4.5Q1 8.5 4.5 8.5Q8 8.5 8 4.5M4.5 8.5V11M2 11.2H7" fill="none" stroke="#dcdcdc" stroke-width="1"/></svg>
<svg class="a" style="left:379px;top:623px;" width="10" height="9" viewBox="0 0 10 9"><path d="M0 3H2.5L5 0.5V8.5L2.5 6H0Z" fill="#dcdcdc"/><path d="M6.5 2.5Q7.8 4.5 6.5 6.5M8 1Q10 4.5 8 8" fill="none" stroke="#dcdcdc" stroke-width="0.9"/></svg>
<svg class="a" style="left:378px;top:641px;" width="12" height="10" viewBox="0 0 12 10"><path d="M0 1H4.5L5.5 2.5H12V10H0Z" fill="#dcdcdc"/><path d="M0.5 3.5H11.5" stroke="#3b3a3b" stroke-width="0.7"/></svg>
<div class="a" style="left:373.9px;top:408.6px;width:110.9px;height:35.4px;background:transparent;border:3.3px solid #cc2c36"></div>
</body></html>
